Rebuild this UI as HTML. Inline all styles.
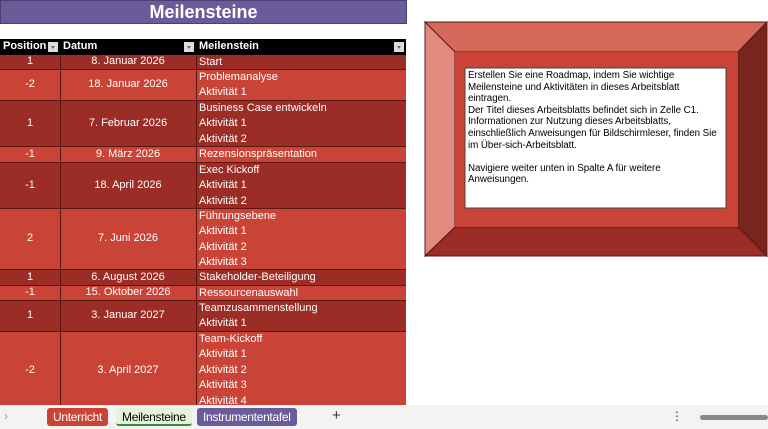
<!DOCTYPE html><html><head><meta charset="utf-8"><style>
body{margin:0;width:768px;height:429px;overflow:hidden;background:#fff;font-family:"Liberation Sans",sans-serif;position:relative}
.title{position:absolute;left:0;top:0;width:405px;height:22px;background:#6b5b9a;border:1px solid #4a4070;color:#fff;font-size:18px;font-weight:bold;text-align:center;line-height:22px}
.r{position:absolute;left:0;width:406px;font-size:11px;color:#fff;border-bottom:1px solid #5a1812;box-sizing:border-box}
.r div{position:absolute;top:0;bottom:0;line-height:15.4px}
.a{left:0;width:60px;text-align:center;border-right:1px solid #5a1812;display:flex;align-items:center;justify-content:center}
.b{left:60px;width:136px;text-align:center;border-right:1px solid #5a1812;display:flex;align-items:center;justify-content:center}
.c{left:199px;right:0}
.d{background:#9b2d26}.l{background:#c94436}
.h{background:#000;font-weight:bold;border:none}
.h div{display:block;text-align:left;padding-left:3px;border:none;box-sizing:border-box}
.h i{position:absolute;top:3px;width:10px;height:10px;background:#ddd}
.h i:after{content:"";position:absolute;left:3px;top:4px;border:2px solid transparent;border-top:3px solid #666}
.tabs{position:absolute;left:0;top:405px;width:768px;height:24px;background:#f3f3f3;font-size:12px}
.tab{position:absolute;top:3px;height:18px;line-height:18px;padding:0 6px;border-radius:3px;color:#fff;letter-spacing:-0.3px}
</style></head><body>
<div class="title">Meilensteine</div>
<div class="r h" style="top:39px;height:16px;line-height:16px"><div style="left:0;width:60px">Position</div><div style="left:60px;width:136px">Datum</div><div style="left:196px">Meilenstein</div><i style="left:48px"></i><i style="left:184px"></i><i style="left:394px"></i></div>
<div class="r d" style="top:55px;height:15px"><div class="a">1</div><div class="b">8. Januar 2026</div><div class="c">Start</div></div>
<div class="r l" style="top:70px;height:31px"><div class="a">-2</div><div class="b">18. Januar 2026</div><div class="c">Problemanalyse<br>Aktivität 1</div></div>
<div class="r d" style="top:101px;height:46px"><div class="a">1</div><div class="b">7. Februar 2026</div><div class="c">Business Case entwickeln<br>Aktivität 1<br>Aktivität 2</div></div>
<div class="r l" style="top:147px;height:16px"><div class="a">-1</div><div class="b">9. März 2026</div><div class="c">Rezensionspräsentation</div></div>
<div class="r d" style="top:163px;height:46px"><div class="a">-1</div><div class="b">18. April 2026</div><div class="c">Exec Kickoff<br>Aktivität 1<br>Aktivität 2</div></div>
<div class="r l" style="top:209px;height:61px"><div class="a">2</div><div class="b">7. Juni 2026</div><div class="c">Führungsebene<br>Aktivität 1<br>Aktivität 2<br>Aktivität 3</div></div>
<div class="r d" style="top:270px;height:16px"><div class="a">1</div><div class="b">6. August 2026</div><div class="c">Stakeholder-Beteiligung</div></div>
<div class="r l" style="top:286px;height:15px"><div class="a">-1</div><div class="b">15. Oktober 2026</div><div class="c">Ressourcenauswahl</div></div>
<div class="r d" style="top:301px;height:31px"><div class="a">1</div><div class="b">3. Januar 2027</div><div class="c">Teamzusammenstellung<br>Aktivität 1</div></div>
<div class="r l" style="top:332px;height:77px;border:none"><div class="a">-2</div><div class="b">3. April 2027</div><div class="c">Team-Kickoff<br>Aktivität 1<br>Aktivität 2<br>Aktivität 3<br>Aktivität 4</div></div>
<svg style="position:absolute;left:0;top:0" width="768" height="429">
<polygon points="425,22 767,22 738,52 455,52" fill="#d4685a" stroke="#5a1812" stroke-width="1"/>
<polygon points="425,22 455,52 455,227 425,256" fill="#e08a80" stroke="#5a1812" stroke-width="1"/>
<polygon points="767,22 767,256 738,227 738,52" fill="#7a241e" stroke="#5a1812" stroke-width="1"/>
<polygon points="425,256 455,227 738,227 767,256" fill="#9b2d26" stroke="#5a1812" stroke-width="1"/>
<rect x="455" y="52" width="283" height="175" fill="#c94436"/>
<rect x="465" y="68" width="261" height="140" fill="#fff" stroke="#444" stroke-width="1"/>
</svg>
<div style="position:absolute;left:468px;top:70px;font-size:9.8px;line-height:11.6px;color:#000;white-space:nowrap;letter-spacing:-0.05px">Erstellen Sie eine Roadmap, indem Sie wichtige<br>Meilensteine und Aktivitäten in dieses Arbeitsblatt<br>eintragen.<br>Der Titel dieses Arbeitsblatts befindet sich in Zelle C1.<br>Informationen zur Nutzung dieses Arbeitsblatts,<br>einschließlich Anweisungen für Bildschirmleser, finden Sie<br>im Über-sich-Arbeitsblatt.<br><br>Navigiere weiter unten in Spalte A für weitere<br>Anweisungen.</div>
<div class="tabs">
<span style="position:absolute;left:4px;top:4px;color:#999">›</span>
<div class="tab" style="left:47px;background:#c94436">Unterricht</div>
<div class="tab" style="left:116px;background:#e4f3dc;color:#000;border-bottom:2px solid #3a8a3a;height:16px">Meilensteine</div>
<div class="tab" style="left:197px;background:#6b5b9a">Instrumententafel</div>
<span style="position:absolute;left:332px;top:2px;font-size:15px;color:#333">+</span>
<span style="position:absolute;left:671px;top:4px;color:#333">⋮</span>
<div style="position:absolute;left:700px;top:10px;width:68px;height:5px;background:#888;border-radius:3px"></div>
</div>
</body></html>
